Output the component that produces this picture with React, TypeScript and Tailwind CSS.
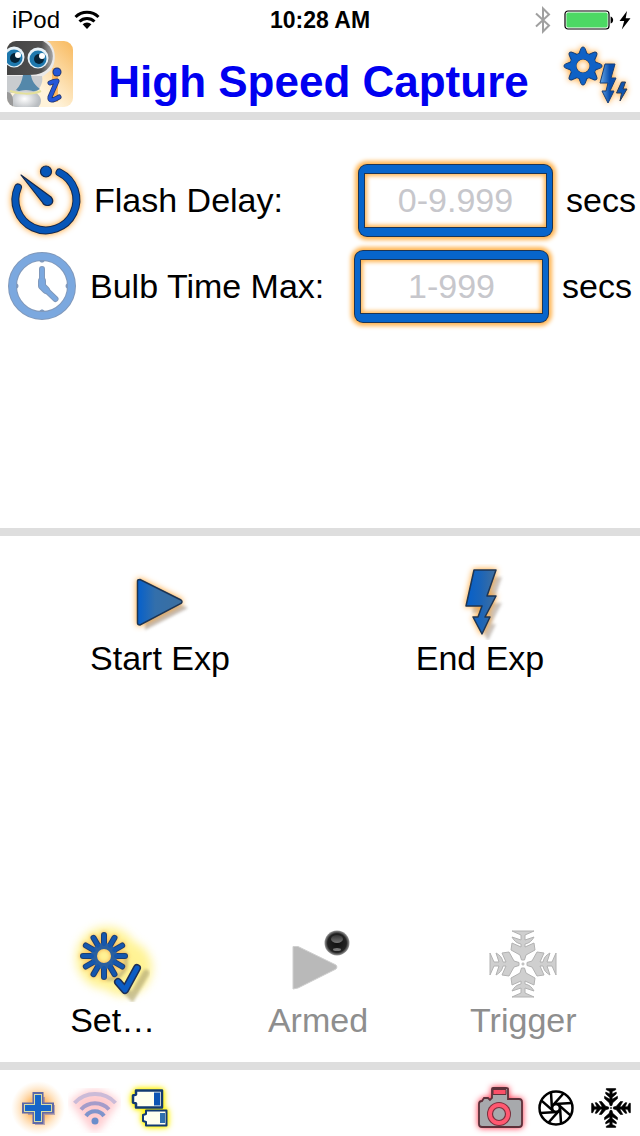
import type { ReactNode } from "react";

const spokes = [0, 30, 60, 90, 120, 150, 180, 210, 240, 270, 300, 330];
const teeth = [0, 45, 90, 135, 180, 225, 270, 315];
const quarters = [0, 90, 180, 270];

const orangeGlow = "drop-shadow-[0_0_3px_#ff9d1f]";

function StatusBar() {
  return (
    <div className="grid h-10 grid-cols-3 items-center px-2 text-black">
      <div className="flex items-center gap-3 pl-1 text-2xl">
        <span>iPod</span>
        <svg width="28" height="20" viewBox="0 0 28 20" aria-hidden="true">
          <g fill="none" stroke="#000" strokeWidth="3">
            <path d="M3.5 7a16.500 16.500 0 0 1 23 0" />
            <path d="M7.500 11.500a10.800 10.800 0 0 1 15 0" />
          </g>
          <path d="M10.600 14.300a6.400 6.400 0 0 1 8.800 0L15 19z" />
        </svg>
      </div>
      <div className="text-center text-[23px] font-bold">10:28 AM</div>
      <div className="flex items-center justify-end">
        <svg width="18" height="28" viewBox="0 0 18 28" aria-hidden="true">
          <path
            d="M2 7.5 15 19.5 9 25.5V2.5L15 8.5 2 20.5"
            fill="none"
            stroke="#a0a0a0"
            strokeWidth="2"
          />
        </svg>
        <svg className="ml-3" width="68" height="20" viewBox="0 0 68 20" aria-hidden="true">
          <rect x="1" y="1" width="44" height="18" rx="3" fill="#fff" stroke="#000" strokeWidth="1.2" />
          <rect x="2.4" y="2.4" width="41.2" height="15.2" rx="1.8" fill="#4cd964" />
          <path d="M46.6 6.5c3.4 1 3.4 6 0 7z" />
          <path d="M63 1 55.5 11h4.7L57.8 19.5 66.5 8.3h-4.8z" />
        </svg>
      </div>
    </div>
  );
}

function RobotIcon() {
  return (
    <svg width="66" height="66" viewBox="0 0 66 66" aria-hidden="true">
      <defs>
        <clipPath id="robotClip">
          <rect width="66" height="66" rx="9" />
        </clipPath>
        <linearGradient id="robotBg" x1="0" x2="1" y1="1" y2="0">
          <stop offset="0.4" stopColor="#fff3da" />
          <stop offset="1" stopColor="#f8b95d" />
        </linearGradient>
        <linearGradient id="robotHead" x1="0" x2="1">
          <stop offset="0" stopColor="#444" />
          <stop offset="0.75" stopColor="#505050" />
          <stop offset="1" stopColor="#a5a5a5" />
        </linearGradient>
        <radialGradient id="robotBody" cx="0.45" cy="0.4">
          <stop offset="0" stopColor="#fff" />
          <stop offset="1" stopColor="#b9bdc1" />
        </radialGradient>
        <filter id="robotBlur">
          <feGaussianBlur stdDeviation="3" />
        </filter>
      </defs>
      <g clipPath="url(#robotClip)">
        <rect width="66" height="66" fill="url(#robotBg)" />
        <path d="M0 0h40c9 5 10 20 4 29L30 40 0 48z" fill="#e9e9e9" />
        <path d="M0 0h36c11 6 12 17 7 25-4 6-11 9-21 9H0z" fill="url(#robotHead)" />
        <path d="M0 35h35c2 8-4 15-8 17H0z" fill="#c9cccf" />
        <path d="M16 34h8c1 7 5 11 9 14-7 4-17 4-24 1 4-4 6-9 7-15z" fill="#5488aa" />
        <ellipse cx="19" cy="60" rx="15" ry="11" fill="url(#robotBody)" />
        <path d="M0 51c4 0 6 4 6 9v6H0z" fill="#999" />
        <path d="M3 50c8 3 22 4 31 0" fill="none" stroke="#e4e09a" strokeWidth="2" />
        <circle cx="7" cy="16" r="10.5" fill="#e8f2f8" />
        <circle cx="7" cy="17" r="8.5" fill="#1e78ad" />
        <circle cx="8" cy="17" r="5" fill="#062337" />
        <circle cx="11" cy="14" r="3" fill="#fff" />
        <circle cx="31" cy="17" r="10.5" fill="#e8f2f8" />
        <circle cx="31" cy="18" r="8.5" fill="#1e78ad" />
        <circle cx="32" cy="18" r="5" fill="#062337" />
        <circle cx="35" cy="15" r="3" fill="#fff" />
        <path d="M50 30 46 58" stroke="#ffb253" strokeWidth="13" strokeLinecap="round" filter="url(#robotBlur)" />
        <g fill="none" stroke="#23366f" strokeWidth="5" strokeLinecap="round" strokeLinejoin="round">
          <path d="M43 42q4-2 7-2L43 56q-1 6 9 0" />
          <path d="M50 31v.1" strokeWidth="9" />
        </g>
        <g fill="none" stroke="#2457d8" strokeWidth="3.5" strokeLinecap="round" strokeLinejoin="round">
          <path d="M43 42q4-2 7-2L43 56q-1 6 9 0" />
          <path d="M50 31v.1" strokeWidth="7" />
        </g>
      </g>
    </svg>
  );
}

function FlashSettingsIcon() {
  return (
    <svg className="drop-shadow-[0_0_3px_#ff9d1f]" width="76" height="68" viewBox="0 0 76 68" aria-hidden="true">
      <defs>
        <linearGradient id="smallBolt" x1="0" x2="1">
          <stop offset="0" stopColor="#6aabea" />
          <stop offset="0.6" stopColor="#0a4fae" />
        </linearGradient>
      </defs>
      <g fill="#0f62c6" stroke="#173f78" strokeWidth="1" strokeLinejoin="round">
        {teeth.map((a) => (
          <path key={a} d="M18 16 21 8.5Q21.5 7 23 7t2 1.5L28 16z" transform={`rotate(${a} 23 26)`} />
        ))}
      </g>
      <circle cx="23" cy="26" r="10" fill="none" stroke="#173f78" strokeWidth="7" />
      <circle cx="23" cy="26" r="10" fill="none" stroke="#0f62c6" strokeWidth="6" />
      {teeth.map((a) => (
        <path key={a} d="M19 16 22 8.500h2L27 16z" fill="#0f62c6" transform={`rotate(${a} 23 26)`} />
      ))}
      <path
        d="M45 24h10l-4 14h5L50 51h4l-6 12-6-12h4l2-8h-8z"
        fill="url(#smallBolt)"
        stroke="#173f78"
        strokeWidth="1"
      />
      <path d="M61.500 42h4l-2.500 7h4L60 61l1.500-8h-5z" fill="#0f55b0" stroke="#2c3c55" strokeWidth="1" />
    </svg>
  );
}

function TimerIcon() {
  return (
    <svg className={orangeGlow} width="76" height="76" viewBox="0 0 76 76" aria-hidden="true">
      <g fill="none" strokeLinecap="round">
        <path d="M51.500 10.500A30.500 30.500 0 1 1 10 25.500" stroke="#14294f" strokeWidth="8" />
        <path d="M51.500 10.500A30.500 30.500 0 1 1 10 25.500" stroke="#0756b8" strokeWidth="6" />
      </g>
      <g fill="#0756b8" stroke="#14294f" strokeWidth="1.2">
        <circle cx="38" cy="9.500" r="5.500" />
        <path d="M13 13 43 35c3.500 4 1.500 8.500-4 8.500-2.500 0-3.500-1-4.500-3z" strokeLinejoin="round" />
      </g>
    </svg>
  );
}

function ClockIcon() {
  return (
    <svg width="72" height="72" viewBox="0 0 72 72" aria-hidden="true">
      <circle cx="34" cy="36" r="29.500" fill="#fff" stroke="#8199bb" strokeWidth="9" />
      <circle cx="34" cy="36" r="29.500" fill="none" stroke="#7ba8df" strokeWidth="7" />
      {quarters.map((a) => (
        <path key={a} d="M31.500 10v1c1 2 4 2 5 0v-1z" fill="#7f99bd" transform={`rotate(${a} 34 36)`} />
      ))}
      <g fill="none" strokeLinecap="round" strokeLinejoin="round">
        <path d="M34 19v17l13.500 13" stroke="#8199bb" strokeWidth="6" />
        <path d="M34 31v5l4 4" stroke="#8199bb" strokeWidth="8" />
        <path d="M34 19v17l13.500 13" stroke="#7ba8df" strokeWidth="4" />
        <path d="M34 31v5l4 4" stroke="#7ba8df" strokeWidth="6" />
      </g>
    </svg>
  );
}

function PlayIcon() {
  return (
    <svg width="76" height="76" viewBox="0 0 76 76" aria-hidden="true">
      <defs>
        <linearGradient id="playFill" x1="0" x2="1">
          <stop offset="0" stopColor="#0560cc" />
          <stop offset="0.4" stopColor="#336fab" />
          <stop offset="1" stopColor="#3c6f9f" />
        </linearGradient>
        <filter id="playShade">
          <feGaussianBlur stdDeviation="1.5" />
        </filter>
      </defs>
      <path d="M23 25 66 44 23 66z" fill="#a99f97" opacity=".7" filter="url(#playShade)" />
      <path
        className={orangeGlow}
        d="M18 15.500 59 36q2 1.500 0 3.500L18 61q-2.500 0-2.500-2V17q0-1.500 2.500-1.500z"
        fill="url(#playFill)"
        stroke="#1d3554"
        strokeWidth="1.5"
      />
    </svg>
  );
}

const boltPath = "M32 6h22l-9 26h9L43 53h5l-8 17-9-17h5l4-11H24z";

function BoltIcon() {
  return (
    <svg width="76" height="76" viewBox="0 0 76 76" aria-hidden="true">
      <defs>
        <linearGradient id="boltFill" x1="0" x2="1">
          <stop offset="0" stopColor="#0560cc" />
          <stop offset="0.5" stopColor="#1c65b8" />
          <stop offset="1" stopColor="#416f9d" />
        </linearGradient>
        <filter id="boltShade">
          <feGaussianBlur stdDeviation="1.5" />
        </filter>
      </defs>
      <path d={boltPath} transform="translate(6 7)" fill="#a99f97" opacity=".6" filter="url(#boltShade)" />
      <path
        className={orangeGlow}
        d={boltPath}
        fill="url(#boltFill)"
        stroke="#1d3554"
        strokeWidth="1.5"
        strokeLinejoin="round"
      />
    </svg>
  );
}

function SetIcon() {
  return (
    <svg className="overflow-visible" width="90" height="76" viewBox="0 0 90 76" aria-hidden="true">
      <defs>
        <filter id="setGlow" x="-50%" y="-50%" width="200%" height="200%">
          <feGaussianBlur stdDeviation="5" />
        </filter>
        <filter id="setShade">
          <feGaussianBlur stdDeviation="1.5" />
        </filter>
      </defs>
      <g fill="#fff07a" opacity=".8" filter="url(#setGlow)">
        <circle cx="39" cy="32" r="31" />
        <circle cx="56" cy="42" r="28" />
      </g>
      <g fill="none" stroke="#b5ab78" opacity=".7" filter="url(#setShade)" strokeLinecap="round">
        <path d="m56 63 8 8 14-24" strokeWidth="7" />
        <path d="M56 28c6 14-4 26-16 25" strokeWidth="4" />
      </g>
      <g className="drop-shadow-[0_0_2px_#f5a94a]" fill="none" strokeLinecap="round">
        <g stroke="#1d3f73" strokeWidth="6">
          {spokes.map((a) => (
            <path key={a} d="M36 18V9" transform={`rotate(${a} 36 30)`} />
          ))}
        </g>
        <circle cx="36" cy="30" r="10" stroke="#2a5f9f" strokeWidth="6" />
        <g stroke="#1557ae" strokeWidth="4">
          {spokes.map((a) => (
            <path key={a} d="M36 18V9" transform={`rotate(${a} 36 30)`} />
          ))}
        </g>
      </g>
      <g fill="none" strokeLinecap="round" strokeLinejoin="round">
        <path d="m50 56 7 8 12-22" stroke="#1d2f55" strokeWidth="8" />
        <path d="m50 56 7 8 12-22" stroke="#0b5cc4" strokeWidth="5" />
      </g>
    </svg>
  );
}

function ArmedIcon() {
  return (
    <svg width="76" height="76" viewBox="0 0 76 76" aria-hidden="true">
      <defs>
        <radialGradient id="armedBall">
          <stop offset="0" stopColor="#111" />
          <stop offset="0.75" stopColor="#222" />
          <stop offset="1" stopColor="#9a9a9a" />
        </radialGradient>
        <linearGradient id="armedShine" x1="0" x2="0" y1="0" y2="1">
          <stop offset="0" stopColor="#333" />
          <stop offset="1" stopColor="#777" />
        </linearGradient>
      </defs>
      <path d="M13 20.500h5L56 39q2 2 0 4L18 62l-5 1z" fill="#b9b9b9" stroke="#cfcfcf" strokeWidth="1" />
      <circle cx="57" cy="17" r="12.500" fill="url(#armedBall)" />
      <ellipse cx="57" cy="13" rx="6" ry="4" fill="url(#armedShine)" />
      <ellipse cx="57" cy="23.500" rx="4" ry="1.500" fill="#777" />
    </svg>
  );
}

const frostArm =
  "M-11-33H11L2-29V-24L11-27Q8-21 2-20V-17L11-21 12-14 3-9 1.5-4H-1.5L-3-9-12-14-11-21-2-17V-20Q-8-21-11-27L-2-24V-29Z";
const darkArm =
  "M-8-33H8V-31L2-28V-24L9-27V-24L2-18V-15L11-20V-16L3-9 1.5-4H-1.5L-3-9-11-16V-20L-2-15V-18L-9-24V-27L-2-24V-28L-8-31Z";

function Snowflake({ size, arm, fill, stroke }: { size: number; arm: string; fill: string; stroke: string }) {
  return (
    <svg width={size} height={size} viewBox="-34 -34 68 68" aria-hidden="true">
      <g fill={fill} stroke={stroke} strokeWidth="1">
        {quarters.map((a) => (
          <path key={a} d={arm} transform={`rotate(${a})`} />
        ))}
      </g>
      <circle r="1.2" fill={fill} stroke={stroke} strokeWidth=".6" />
    </svg>
  );
}

function PlusIcon() {
  return (
    <svg className="overflow-visible" width="56" height="56" viewBox="0 0 56 56" aria-hidden="true">
      <defs>
        <radialGradient id="plusGlow">
          <stop offset="0.4" stopColor="#ffb45c" stopOpacity=".85" />
          <stop offset="1" stopColor="#ffd9a8" stopOpacity="0" />
        </radialGradient>
      </defs>
      <circle cx="28" cy="28" r="27" fill="url(#plusGlow)" />
      <path d="M30 17v28M18 30h27" stroke="#8d7fa8" strokeWidth="10" opacity=".6" />
      <path d="M28 12v32M12 28h32" stroke="#5f69a8" strokeWidth="11" />
      <path d="M28 14v28M14 28h28" stroke="#d9dda4" strokeWidth="8" />
      <path d="M28 15v26M15 28h26" stroke="#1666c9" strokeWidth="6" />
    </svg>
  );
}

function WirelessIcon() {
  return (
    <svg className="overflow-visible" width="56" height="56" viewBox="0 0 56 56" aria-hidden="true">
      <defs>
        <filter id="wirelessGlow">
          <feGaussianBlur stdDeviation="3.5" />
        </filter>
      </defs>
      <path
        d="M7 22q21-20 43 0L33 47q-4 4-8 0z"
        fill="#ffb9bd"
        stroke="#ffc8cc"
        strokeWidth="6"
        opacity=".75"
        filter="url(#wirelessGlow)"
      />
      <g fill="none" strokeWidth="4">
        <path d="M8.500 23a28 28 0 0 1 41 0" stroke="#cbbbd8" />
        <path d="M15 29.500a19 19 0 0 1 28 0" stroke="#a49cca" />
        <path d="M20 36a11 11 0 0 1 18 0" stroke="#7f94cb" />
      </g>
      <circle cx="29" cy="41" r="3.500" fill="#6b8dcb" />
    </svg>
  );
}

function BatteriesIcon() {
  return (
    <svg
      className="drop-shadow-[0_0_3px_#fff200]"
      width="56"
      height="56"
      viewBox="0 0 56 56"
      aria-hidden="true"
    >
      <g className="drop-shadow-[0_0_2px_#fff200]" fill="#fffff0" stroke="#123a72" strokeLinejoin="round">
        <path d="M14 10.500h26v17H14v-4l-3-1v-7l3-1z" strokeWidth="2.5" />
        <path d="M24 30.500h20.500v15H24v-3.500l-3-1v-6l3-1z" strokeWidth="2" />
      </g>
      <path d="M32 12.500h6v13h-6z" fill="#0d55b4" />
      <path d="M38 33h5v10h-5z" fill="#2e6fae" />
    </svg>
  );
}

function CameraIcon() {
  return (
    <svg
      className="drop-shadow-[0_0_3px_#ff2742]"
      width="56"
      height="56"
      viewBox="0 0 56 56"
      aria-hidden="true"
    >
      <path
        d="M8 24q0-3 3-3l2-3h4l2 2 2-2V9q0-1 1-1h13q2 0 2 1v10h11q3 0 3 3v22q0 3-3 3H11q-3 0-3-3z"
        fill="#a7a9ac"
        stroke="#5d3039"
        strokeWidth="1.8"
      />
      <path d="M22 9.500h13v5H22z" fill="#fb4f68" stroke="#5d3039" strokeWidth="1" />
      <circle cx="28" cy="34" r="12" fill="#7a2f3c" />
      <circle cx="28" cy="34" r="11" fill="#ff5870" />
      <circle cx="28" cy="34" r="6.500" fill="#a7a9ac" stroke="#7a2f3c" strokeWidth="1.2" />
    </svg>
  );
}

function ApertureIcon() {
  return (
    <svg width="56" height="56" viewBox="0 0 56 56" aria-hidden="true">
      <g fill="none" stroke="#000">
        <circle cx="29" cy="28" r="16.500" strokeWidth="2.5" />
        <circle cx="29" cy="28" r="4" strokeWidth="2.5" />
        {teeth.map((a) => (
          <path key={a} d="M25 29 24 12.500" strokeWidth="2.5" transform={`rotate(${a} 29 28)`} />
        ))}
      </g>
    </svg>
  );
}

function Divider() {
  return <hr className="h-2 shrink-0 border-0 bg-[#dedede]" />;
}

function TimeField(props: {
  id: string;
  label: string;
  placeholder: string;
  icon: ReactNode;
  className: string;
}) {
  return (
    <div className={`flex h-[86px] items-center gap-[10px] pl-2 ${props.className}`}>
      {props.icon}
      <label htmlFor={props.id} className="flex-1 whitespace-nowrap">
        {props.label}
      </label>
      <input
        id={props.id}
        type="text"
        placeholder={props.placeholder}
        className="h-[71px] w-[193px] rounded-lg border-x-[5px] border-y-[8px] border-[#0765cb] bg-white text-center shadow-[0_0_0_1px_#1d3554,0_0_4px_4px_#ffb450,inset_0_0_0_1px_#1d3554,inset_0_0_4px_3px_#ffb450] placeholder:text-[#c7c7cc]"
      />
      <span className="ml-1 w-[70px]">secs</span>
    </div>
  );
}

function Action({ label, icon, disabled }: { label: string; icon: ReactNode; disabled?: boolean }) {
  return (
    <button type="button" disabled={disabled} className="flex flex-col items-center disabled:text-[#8e8e8e]">
      <span className="flex h-[76px] items-center">{icon}</span>
      <span className="leading-9">{label}</span>
    </button>
  );
}

export default function App() {
  return (
    <div className="flex min-h-screen flex-col bg-white font-['Liberation_Sans',Arial,sans-serif] text-[34px] text-black">
      <StatusBar />
      <header className="flex h-[72px] items-start pr-1 pl-[7px]">
        <button type="button" aria-label="Info" className="mt-px">
          <RobotIcon />
        </button>
        <h1 className="mt-[18px] flex-1 pl-1 text-center text-[44px] leading-[48px] font-bold whitespace-nowrap text-[#0000f0]">
          High Speed Capture
        </h1>
        <button type="button" aria-label="Flash settings">
          <FlashSettingsIcon />
        </button>
      </header>
      <Divider />

      <section className="min-h-[408px] pt-[37px]">
        <TimeField id="flash-delay" label="Flash Delay:" placeholder="0-9.999" icon={<TimerIcon />} className="pr-1" />
        <TimeField id="bulb-time" label="Bulb Time Max:" placeholder="1-999" icon={<ClockIcon />} className="pr-2" />
      </section>
      <Divider />

      <main className="flex flex-1 flex-col justify-between gap-8 pt-7 pb-6">
        <div className="grid grid-cols-2">
          <Action label="Start Exp" icon={<PlayIcon />} />
          <Action label="End Exp" icon={<BoltIcon />} />
        </div>
        <div className="grid grid-cols-3 pr-[14px] pl-[10px]">
          <Action label="Set…" icon={<SetIcon />} />
          <Action label="Armed" icon={<ArmedIcon />} disabled />
          <Action
            label="Trigger"
            icon={<Snowflake size={68} arm={frostArm} fill="#cfcfcf" stroke="#b2b2b2" />}
            disabled
          />
        </div>
      </main>
      <Divider />

      <footer className="flex h-[66px] items-end justify-between pr-px pl-[10px]">
        <div className="flex">
          <button type="button" aria-label="Add">
            <PlusIcon />
          </button>
          <button type="button" aria-label="Wireless">
            <WirelessIcon />
          </button>
          <button type="button" aria-label="Batteries">
            <BatteriesIcon />
          </button>
        </div>
        <div className="flex">
          <button type="button" aria-label="Camera">
            <CameraIcon />
          </button>
          <button type="button" aria-label="Aperture">
            <ApertureIcon />
          </button>
          <button type="button" aria-label="Freeze" className="flex size-14 items-center justify-center">
            <Snowflake size={40} arm={darkArm} fill="#000" stroke="#000" />
          </button>
        </div>
      </footer>
    </div>
  );
}
